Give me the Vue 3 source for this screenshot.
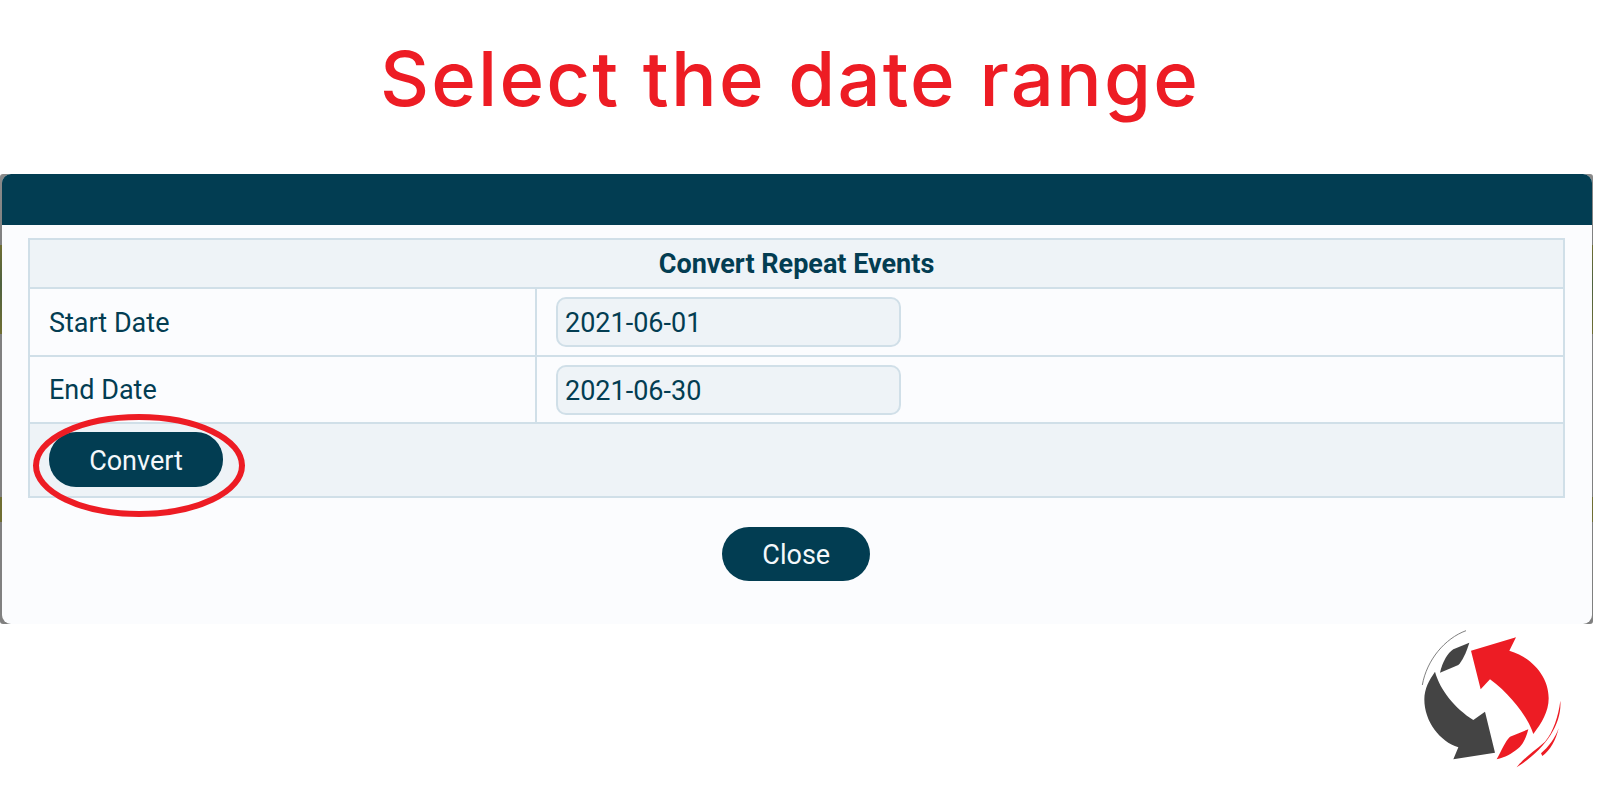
<script setup>
const rows = [
  { label: 'Start Date', value: '2021-06-01' },
  { label: 'End Date', value: '2021-06-30' }
]
</script>

<template>
  <div class="page">
    <h1 class="title">Select the date range</h1>
    <section class="window">
      <div class="inner">
        <div class="bar"></div>
        <div class="body">
          <div class="table">
            <div class="head">Convert Repeat Events</div>
            <div v-for="row in rows" :key="row.label" class="row">
              <div class="label">{{ row.label }}</div>
              <div class="field"><div class="input">{{ row.value }}</div></div>
            </div>
            <div class="foot">
              <button class="btn convert">Convert</button>
              <svg class="oval" viewBox="0 0 212 103" fill="none">
                <ellipse cx="106" cy="51.5" rx="103" ry="48.5" stroke="#ed1c24" stroke-width="6" />
              </svg>
            </div>
          </div>
          <div class="actions"><button class="btn close">Close</button></div>
        </div>
      </div>
    </section>
    <div class="logo-row">
      <svg class="logo" viewBox="0 0 630 540">
        <path fill="#ed1c24" d="M243 122 L378 82 L358 122 C420 140 476 195 476 265 C476 305 455 340 430 372 C415 325 365 256 300 208 L272 238 Z" />
        <path fill="#444" d="M315 428 L190 448 L205 412 C150 395 103 335 103 268 C103 235 118 210 135 185 C150 240 195 295 250 330 L285 305 Z" />
        <path fill="#444" d="M238 98 C228 130 218 150 205 165 L150 188 C158 155 172 130 190 118 Z" />
        <path fill="#ed1c24" d="M320 448 C335 420 345 395 360 380 L415 358 C408 385 398 405 385 415 C365 432 345 442 320 448 Z" />
        <path fill="none" stroke="#666" stroke-width="2.5" d="M97 225 C110 150 165 85 228 62" />
        <path fill="#ed1c24" d="M511 272 C516 340 470 415 380 472 C400 445 430 425 465 395 C490 365 505 320 511 272 Z" />
        <path fill="#ed1c24" d="M506 355 C498 390 480 422 457 438 L453 430 C475 412 495 385 506 355 Z" />
      </svg>
    </div>
  </div>
</template>

<style>
html, body { margin: 0; background: #fff; }
</style>

<style scoped>
.page {
  width: 1600px;
  height: 800px;
  overflow: hidden;
  background: #fff;
  font-family: Roboto, sans-serif;
  color: #033d52;
}
.title {
  margin: 0;
  height: 174px;
  box-sizing: border-box;
  padding: 36px 20px 0 0;
  text-align: center;
  font-family: Inter, sans-serif;
  font-weight: 450;
  font-size: 76px;
  line-height: 84px;
  letter-spacing: 2.2px;
  color: #ed1c24;
}
.window {
  width: 1593px;
  height: 450px;
  box-sizing: border-box;
  padding: 0 1px 0 1.5px;
  border-radius: 3px;
  background: linear-gradient(to bottom,
    #8a8a8a 0, #808080 71px,
    #6f6e33 71px, #4f6240 110px, #6f6e33 160px,
    #808080 160px, #808080 323px,
    #6f6e33 323px, #6f6e33 348px,
    #808080 348px, #808080 100%);
}
.inner {
  height: 100%;
  background: #fbfcfe;
  border-radius: 9px;
  overflow: hidden;
}
.bar {
  height: 50.5px;
  background: #023d52;
}
.body {
  padding: 13.5px 27.5px 0 26.5px;
}
.table {
  width: 1537px;
  box-sizing: border-box;
  border: 2px solid #d0dfe8;
}
.head {
  height: 49px;
  box-sizing: border-box;
  padding-top: 1px;
  background: #eef3f7;
  border-bottom: 2px solid #d0dfe8;
  display: flex;
  align-items: center;
  justify-content: center;
  font-weight: 700;
  font-size: 27px;
}
.row {
  height: 68px;
  box-sizing: border-box;
  display: flex;
  border-bottom: 2px solid #d0dfe8;
  font-size: 27px;
}
.row + .row {
  height: 67px;
}
.label {
  width: 507px;
  box-sizing: border-box;
  padding: 1px 0 0 19px;
  border-right: 2px solid #d0dfe8;
  display: flex;
  align-items: center;
}
.field {
  flex: 1;
  padding-left: 19px;
  display: flex;
  align-items: center;
}
.input {
  width: 345px;
  height: 50px;
  box-sizing: border-box;
  padding: 2px 0 0 7px;
  display: flex;
  align-items: center;
  background: #eef3f7;
  border: 2px solid #d0dfe8;
  border-radius: 10px;
}
.foot {
  position: relative;
  height: 72px;
  box-sizing: border-box;
  background: #eef3f7;
  padding: 8px 0 0 19px;
}
.btn {
  display: block;
  padding: 2px 0 0;
  border: 0;
  background: #023d52;
  color: #f4f8fb;
  font-family: Roboto, sans-serif;
  font-size: 27px;
}
.convert {
  width: 174px;
  height: 55px;
  border-radius: 27px;
}
.oval {
  position: absolute;
  left: 2.5px;
  top: -10px;
  width: 212px;
  height: 103px;
}
.actions {
  display: flex;
  justify-content: center;
  padding: 29px 0 0 0;
}
.close {
  width: 148px;
  height: 54px;
  border-radius: 27px;
}
.logo-row {
  display: flex;
  justify-content: flex-end;
}
.logo {
  display: block;
  width: 210px;
  height: 180px;
  margin-top: -14px;
  filter: blur(0.5px);
}
</style>
